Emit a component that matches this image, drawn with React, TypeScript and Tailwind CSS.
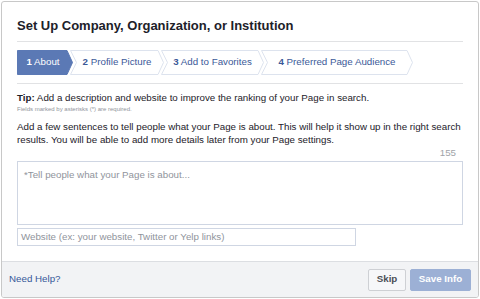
import React from "react";

const steps = [
  { n: "1", label: "About", w: 56, active: true },
  { n: "2", label: "Profile Picture", w: 94, active: false },
  { n: "3", label: "Add to Favorites", w: 103, active: false },
  { n: "4", label: "Preferred Page Audience", w: 152, active: false },
];

function Step({ n, label, w, active, first }: { n: string; label: string; w: number; active: boolean; first: boolean }) {
  const d = 6;
  const h = 25;
  const pts = first
    ? `0.5,0.5 ${w - d},0.5 ${w - 0.5},${h / 2} ${w - d},${h - 0.5} 0.5,${h - 0.5}`
    : `0.5,0.5 ${w - d},0.5 ${w - 0.5},${h / 2} ${w - d},${h - 0.5} 0.5,${h - 0.5} ${d + 0.5},${h / 2}`;
  return (
    <div
      className={`relative flex h-[25px] shrink-0 items-center justify-center ${first ? "" : "-ml-[3px] pl-[4px]"} pr-[4px]`}
      style={{ width: w }}
    >
      <svg className="absolute inset-0" width={w} height={h} viewBox={`0 0 ${w} ${h}`}>
        <polygon points={pts} fill={active ? "#5b79b5" : "#ffffff"} stroke={active ? "#5b79b5" : "#dde3ee"} strokeWidth="1" />
      </svg>
      <span className={`relative whitespace-nowrap text-[9.75px] ${active ? "text-white" : "text-[#3b5998]"}`}>
        <span className="font-bold">{n}</span> {label}
      </span>
    </div>
  );
}

export default function App() {
  return (
    <div className="h-[299px] w-[480px] bg-white" style={{ fontFamily: '"Liberation Sans", Arial, Helvetica, sans-serif' }}>
      <div className="ml-[1px] mt-[1px] flex h-[297px] w-[478px] flex-col overflow-hidden rounded-[3px] border border-[#c8c8c8] bg-white">
        <div className="flex-1 px-[15px]">
          <div className="flex h-[39px] items-center pt-[9px] text-[13px] font-bold text-[#1d2129]">
            Set Up Company, Organization, or Institution
          </div>
          <div className="h-px bg-[#e1e2e4]" />
          <div className="flex h-[41px] items-center">
            {steps.map((s, i) => (
              <Step key={s.n} {...s} first={i === 0} />
            ))}
          </div>
          <div className="h-px bg-[#e1e2e4]" />
          <div className="mt-[7px] text-[9.75px] leading-[13px] text-[#1d2129]">
            <span className="font-bold">Tip:</span> Add a description and website to improve the ranking of your Page in search.
          </div>
          <div className="text-[6px] leading-[11px] text-[#90949c]">Fields marked by asterisks (*) are required.</div>
          <div className="mt-[5px] text-[9.75px] leading-[13px] text-[#1d2129]">
            Add a few sentences to tell people what your Page is about. This will help it show up in the right search results. You will be able to add more details later from your Page settings.
          </div>
          <div className="mt-[1px] pr-[7px] text-right text-[9.75px] leading-[12px] text-[#a0a3a8]">155</div>
          <div className="mt-[2px] h-[64px] border border-[#cfd6e3] px-[6px] pt-[6px] text-[9.75px] text-[#90949c]">
            *Tell people what your Page is about...
          </div>
          <div className="mt-[3px] flex h-[18px] w-[339px] items-center border border-[#cfd6e3] px-[3px] text-[9.75px] text-[#90949c]">
            Website (ex: your website, Twitter or Yelp links)
          </div>
        </div>
        <div className="flex h-[36px] items-center justify-between border-t border-[#dcdee2] bg-[#f2f3f5] pl-[7px] pr-[7px]">
          <span className="text-[9.75px] text-[#365899]">Need Help?</span>
          <div className="flex items-center gap-[4px]">
            <button className="flex h-[22px] w-[38px] items-center justify-center rounded-[2px] border border-[#ced0d4] bg-[#f6f7f9] text-[9.75px] font-bold text-[#4b4f56]">
              Skip
            </button>
            <button className="flex h-[22px] w-[61px] items-center justify-center rounded-[2px] border border-[#9cb0d5] bg-[#9cb0d5] text-[9.75px] font-bold text-white">
              Save Info
            </button>
          </div>
        </div>
      </div>
    </div>
  );
}
